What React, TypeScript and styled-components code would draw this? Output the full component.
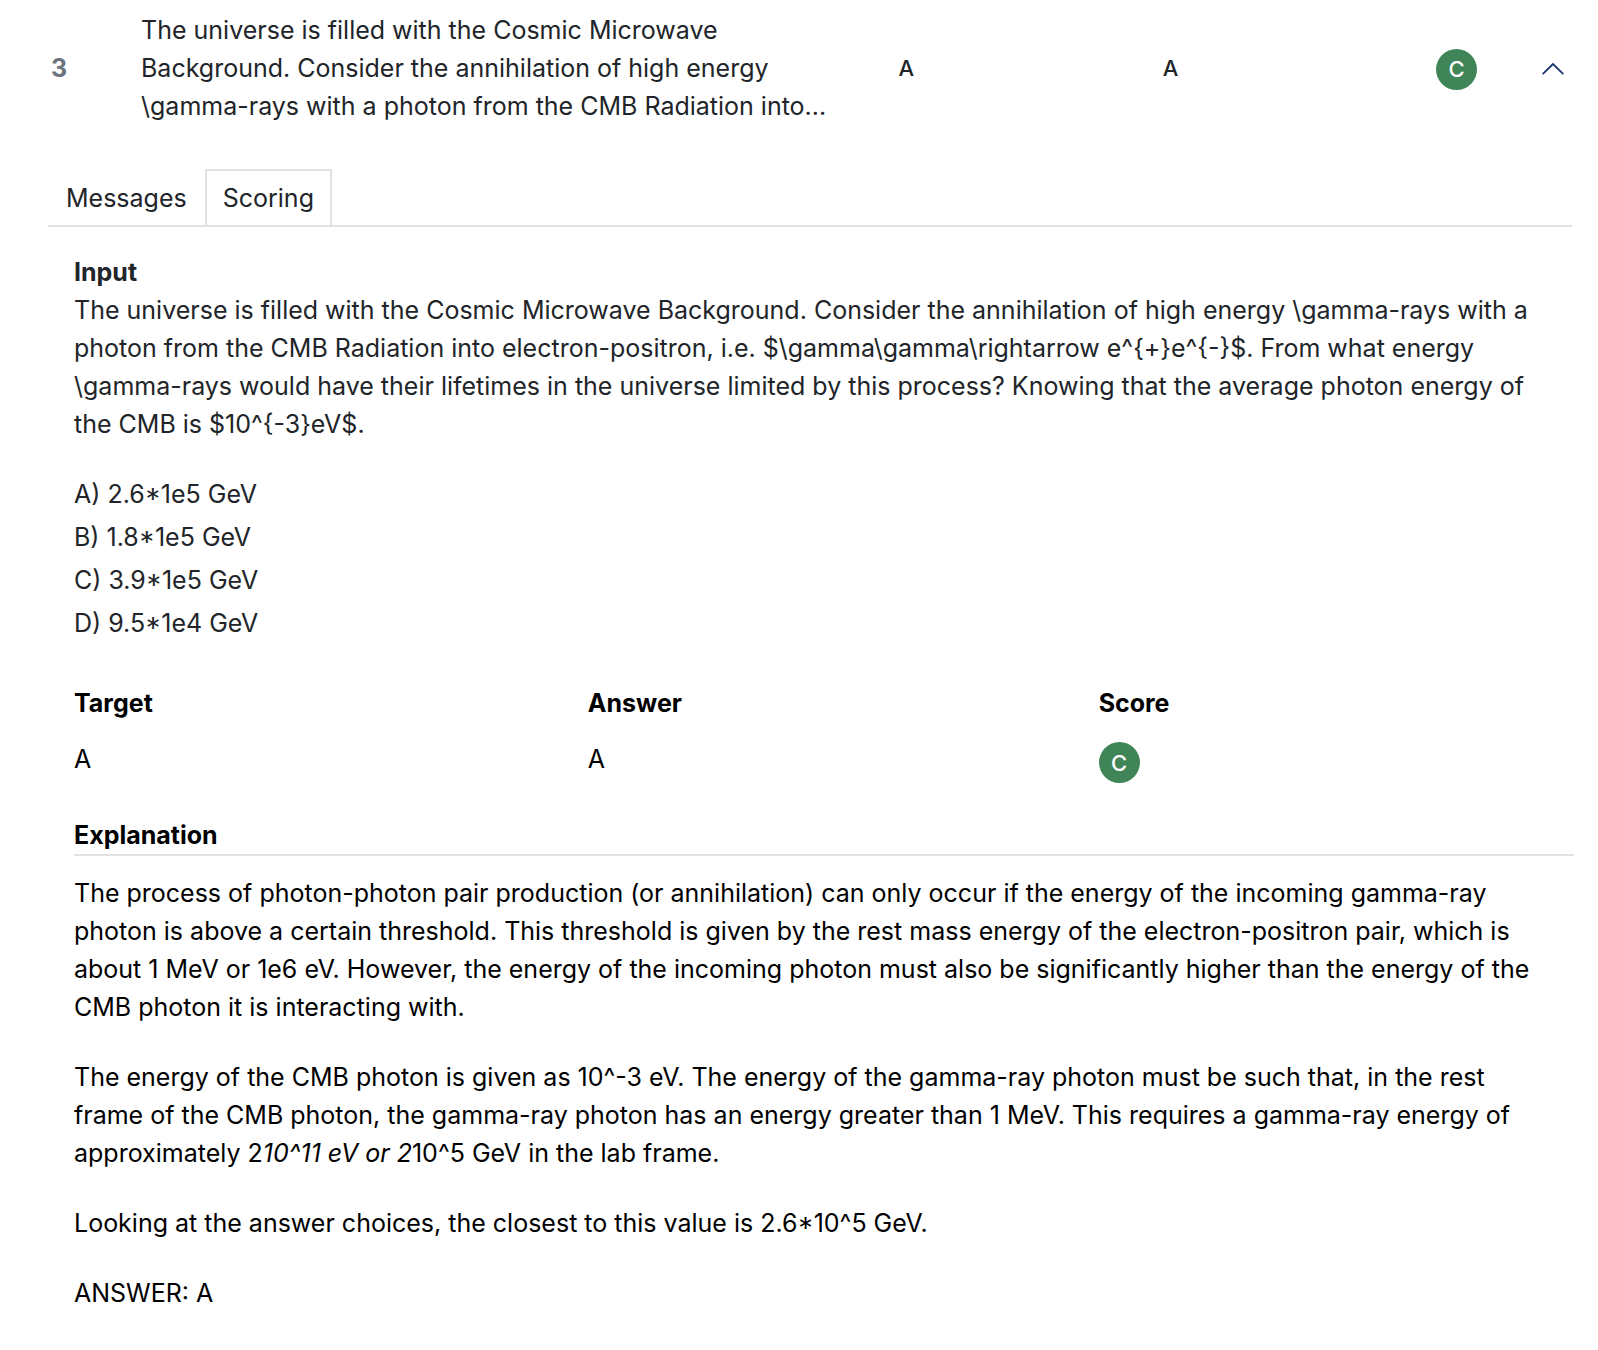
import React, { useState } from "react";
import styled, { createGlobalStyle } from "styled-components";

const GlobalStyle = createGlobalStyle`
  *, *::before, *::after { box-sizing: border-box; }
  body {
    margin: 0;
    background: #fff;
    color: #212529;
    font-family: Inter, "Liberation Sans", sans-serif;
    font-size: 25px;
    line-height: 38px;
  }
`;

const Page = styled.main`
  padding: 11px 26px 24px 48px;
`;

const Summary = styled.header`
  display: grid;
  grid-template-columns: 93px 58.5fr 20.4fr 21.1fr 42px 94px;
  align-items: center;
`;

const Index = styled.span`
  padding-left: 3px;
  color: #6c757d;
  font-weight: 700;
`;

const Question = styled.p`
  margin: 0;
  padding-right: 60px;
  display: -webkit-box;
  -webkit-box-orient: vertical;
  -webkit-line-clamp: 3;
  overflow: hidden;
`;

const Cell = styled.span`
  font-size: 22px;
  font-weight: 500;
`;

const Badge = styled.span`
  display: flex;
  align-items: center;
  justify-content: center;
  width: 41px;
  height: 41px;
  margin-top: 2px;
  border-radius: 50%;
  background: #408558;
  color: #fff;
  font-size: 22px;
  font-weight: 500;
  line-height: 38px;
`;

const Toggle = styled.button`
  display: flex;
  justify-self: end;
  padding: 8px;
  border: 0;
  background: none;
  color: #1d3771;
  cursor: pointer;
`;

const TabList = styled.div`
  display: flex;
  margin-top: 44px;
  border-bottom: 2px solid #dee2e6;
`;

const Tab = styled.button<{ $active: boolean }>`
  padding: 8px 16px;
  border: 2px solid ${(p) => (p.$active ? "#dee2e6" : "transparent")};
  border-bottom: 0;
  background: #fff;
  color: inherit;
  font: inherit;
  cursor: pointer;
`;

const Panel = styled.section`
  padding: 26px 0 0 26px;
`;

const Heading = styled.h2`
  margin: 0;
  font-size: inherit;
  font-weight: 700;
`;

const Paragraph = styled.p`
  margin: 0 0 32px;
  padding-right: 24px;
`;

const Choices = styled.ul`
  display: flex;
  flex-direction: column;
  gap: 5px;
  margin: 0;
  padding: 0;
  list-style: none;
`;

const Result = styled.div`
  color: #000;
`;

const ScoreTable = styled.table`
  width: 100%;
  margin-top: 42px;
  border-collapse: collapse;
  table-layout: fixed;
`;

const HeadCell = styled.th`
  padding: 0 0 18px;
  text-align: left;
  font-weight: 700;
`;

const DataCell = styled.td`
  height: 43px;
  padding: 0;
  vertical-align: top;
`;

const Explanation = styled(Heading)`
  margin: 33px -2px 18px 0;
  border-bottom: 2px solid #dee2e6;
`;

const question =
  "The universe is filled with the Cosmic Microwave Background. Consider the annihilation of high energy \\gamma-rays with a photon from the CMB Radiation into";

const preview = `${question}...`;

const fullInput = `${question} electron-positron, i.e. $\\gamma\\gamma\\rightarrow e^{+}e^{-}$. From what energy \\gamma-rays would have their lifetimes in the universe limited by this process? Knowing that the average photon energy of the CMB is $10^{-3}eV$.`;

export default function App() {
  const [tab, setTab] = useState("Scoring");
  return (
    <>
      <GlobalStyle />
      <Page>
        <Summary>
          <Index>3</Index>
          <Question>{preview}</Question>
          <Cell>A</Cell>
          <Cell>A</Cell>
          <Badge>C</Badge>
          <Toggle aria-label="Collapse sample">
            <svg width="22" height="14" viewBox="0 0 22 14" fill="none" stroke="currentColor" strokeWidth="1.8" strokeLinecap="round" strokeLinejoin="round">
              <path d="M1.2 12.6 11 3l9.8 9.6" />
            </svg>
          </Toggle>
        </Summary>
        <TabList role="tablist">
          {["Messages", "Scoring"].map((name) => (
            <Tab key={name} role="tab" aria-selected={tab === name} $active={tab === name} onClick={() => setTab(name)}>
              {name}
            </Tab>
          ))}
        </TabList>
        <Panel role="tabpanel">
          <Heading>Input</Heading>
          <Paragraph>{fullInput}</Paragraph>
          <Choices>
            <li>A) 2.6*1e5 GeV</li>
            <li>B) 1.8*1e5 GeV</li>
            <li>C) 3.9*1e5 GeV</li>
            <li>D) 9.5*1e4 GeV</li>
          </Choices>
          <Result>
            <ScoreTable>
              <colgroup>
                <col width="34.3%" />
                <col width="34.1%" />
                <col />
              </colgroup>
              <thead>
                <tr>
                  <HeadCell scope="col">Target</HeadCell>
                  <HeadCell scope="col">Answer</HeadCell>
                  <HeadCell scope="col">Score</HeadCell>
                </tr>
              </thead>
              <tbody>
                <tr>
                  <DataCell>A</DataCell>
                  <DataCell>A</DataCell>
                  <DataCell>
                    <Badge>C</Badge>
                  </DataCell>
                </tr>
              </tbody>
            </ScoreTable>
            <Explanation>Explanation</Explanation>
            <Paragraph>
              The process of photon-photon pair production (or annihilation) can only occur if the energy of the
              incoming gamma-ray photon is above a certain threshold. This threshold is given by the rest mass energy
              of the electron-positron pair, which is about 1 MeV or 1e6 eV. However, the energy of the incoming photon
              must also be significantly higher than the energy of the CMB photon it is interacting with.
            </Paragraph>
            <Paragraph>
              The energy of the CMB photon is given as 10^-3 eV. The energy of the gamma-ray photon must be such that,
              in the rest frame of the CMB photon, the gamma-ray photon has an energy greater than 1 MeV. This requires
              a gamma-ray energy of approximately 2<em>10^11 eV or 2</em>10^5 GeV in the lab frame.
            </Paragraph>
            <Paragraph>Looking at the answer choices, the closest to this value is 2.6*10^5 GeV.</Paragraph>
            <Paragraph>ANSWER: A</Paragraph>
          </Result>
        </Panel>
      </Page>
    </>
  );
}
